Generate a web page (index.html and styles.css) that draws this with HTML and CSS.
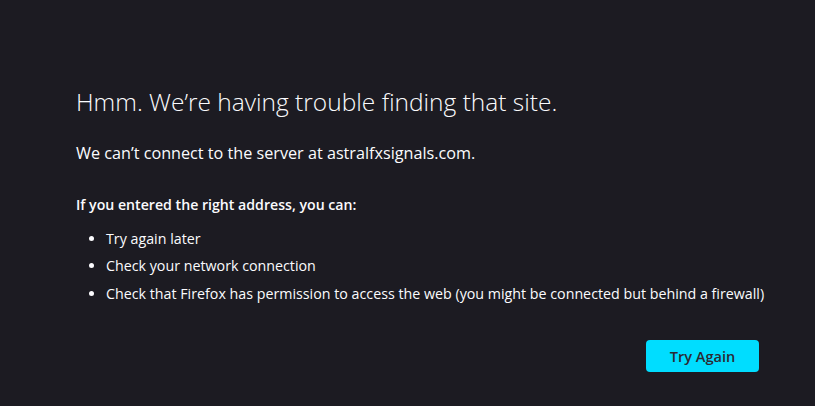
FILE: index.html
```html
<!DOCTYPE html>
<html lang="en">
<head>
    <meta charset="UTF-8">
    <meta name="viewport" content="width=device-width, initial-scale=1.0">
    <title>Problem loading page</title>
    <link rel="stylesheet" href="styles.css">
</head>
<body>
    <div class="error-page">
        <h1 class="error-title">Hmm. We’re having trouble finding that site.</h1>
        <p class="error-desc">We can’t connect to the server at astralfxsignals.com.</p>

        <p class="error-hint">If you entered the right address, you can:</p>
        <ul class="error-list">
            <li>Try again later</li>
            <li>Check your network connection</li>
            <li>Check that Firefox has permission to access the web (you might be connected but behind a firewall)</li>
        </ul>

        <div class="button-row">
            <button class="try-again">Try Again</button>
        </div>
    </div>
</body>
</html>
```

FILE: styles.css
```css
html, body {
    margin: 0;
    height: 100%;
}
body {
    font-family: "Open Sans", "Noto Sans", sans-serif;
    background-color: #1c1b22;
    color: #fbfbfe;
}
.error-page {
    width: 683px;
    padding: 86px 0 0 76px;
}
.error-title {
    margin: 0;
    font-size: 24.5px;
    font-weight: 300;
    line-height: 32px;
}
.error-desc {
    margin: 24px 0 0;
    font-size: 16.2px;
    line-height: 22px;
}
.error-hint {
    margin: 31px 0 0;
    font-size: 14.15px;
    font-weight: 600;
    line-height: 20px;
}
.error-list {
    margin: 14px 0 0;
    padding-left: 30px;
    font-size: 14.25px;
    line-height: 20px;
    display: flex;
    flex-direction: column;
    gap: 7.3px;
}
.error-list li {
    white-space: nowrap;
}
.button-row {
    margin-top: 36px;
    display: flex;
    justify-content: flex-end;
}
.try-again {
    font-family: inherit;
    font-size: 14.6px;
    font-weight: 600;
    line-height: 20px;
    width: 113px;
    padding: 6px 0;
    background-color: #00ddff;
    color: #2b2a33;
    border: none;
    border-radius: 4px;
    cursor: pointer;
}
.try-again:hover {
    background-color: #80ebff;
}
```
